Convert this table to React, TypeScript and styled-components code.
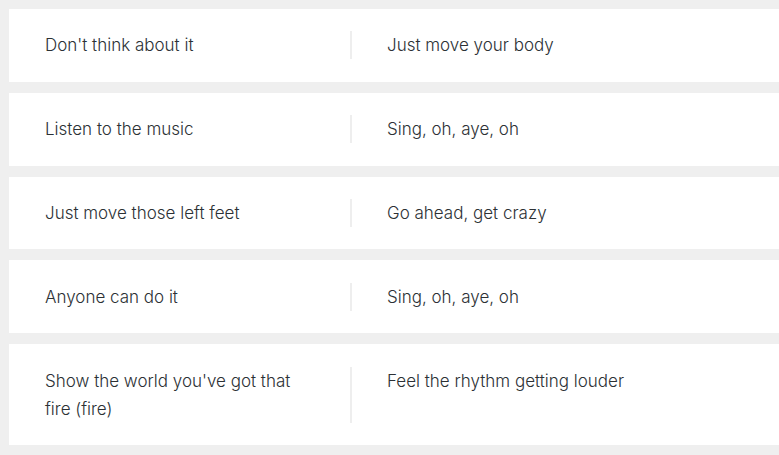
import React from "react";
import styled, { createGlobalStyle } from "styled-components";

const Global = createGlobalStyle`
  html, body { margin: 0; padding: 0; background: #efefef; }
  body { overflow: hidden; }
`;

const List = styled.div`
  display: flex;
  flex-direction: column;
  gap: 11px;
  padding: 9px 0 0 9px;
  font-family: Inter, "Noto Sans", sans-serif;
  font-size: 17px;
  font-weight: 300;
  line-height: 28px;
  color: #2c3135;
  font-variant-ligatures: none;
`;

const Card = styled.div`
  display: grid;
  grid-template-columns: 341px 1fr;
  background: #fff;
  padding: 22.4px 0;
`;

const Cell = styled.div<{ $right?: boolean }>`
  padding-left: ${(p) => (p.$right ? "35px" : "36px")};
  padding-right: ${(p) => (p.$right ? "0" : "36px")};
  border-left: ${(p) => (p.$right ? "2px solid #eeeeee" : "none")};
`;

const rows: [string, string][] = [
  ["Don't think about it", "Just move your body"],
  ["Listen to the music", "Sing, oh, aye, oh"],
  ["Just move those left feet", "Go ahead, get crazy"],
  ["Anyone can do it", "Sing, oh, aye, oh"],
  ["Show the world you've got that fire (fire)", "Feel the rhythm getting louder"],
];

export default function App() {
  return (
    <>
      <Global />
      <List>
        {rows.map(([a, b], i) => (
          <Card key={i}>
            <Cell>{a}</Cell>
            <Cell $right>{b}</Cell>
          </Card>
        ))}
      </List>
    </>
  );
}
